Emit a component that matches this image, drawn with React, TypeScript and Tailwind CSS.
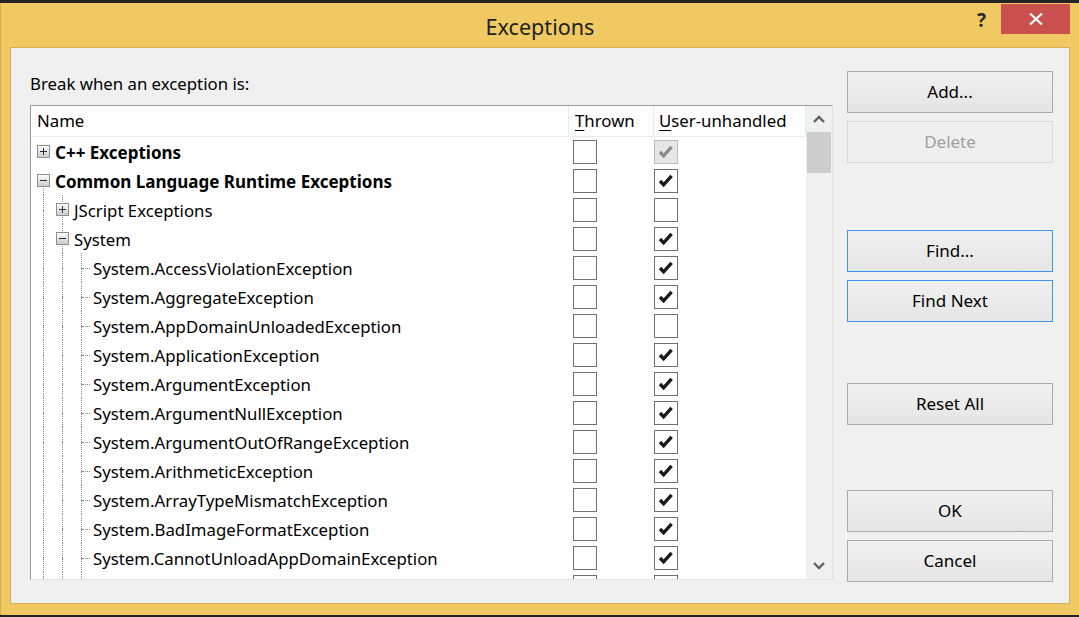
import type { ReactNode } from 'react'

type Gutter = { top?: boolean; bottom?: boolean; tick?: boolean; box?: 'plus' | 'minus' }
type Check = 'on' | 'off' | 'disabled'

type TreeRow = {
  label: string
  gutters: Gutter[]
  bold?: boolean
  thrown: Check
  unhandled: Check
}

const FULL: Gutter = { top: true, bottom: true }
const LEAF: Gutter[] = [FULL, FULL, { top: true, bottom: true, tick: true }]

const leaf = (label: string, unhandled: Check = 'on'): TreeRow => ({
  label,
  gutters: LEAF,
  thrown: 'off',
  unhandled
})

// last row is scrolled half out of view, its label sits below the list edge
const ROWS: TreeRow[] = [
  { label: 'C++ Exceptions', gutters: [{ box: 'plus' }], bold: true, thrown: 'off', unhandled: 'disabled' },
  {
    label: 'Common Language Runtime Exceptions',
    gutters: [{ box: 'minus', bottom: true }],
    bold: true,
    thrown: 'off',
    unhandled: 'on'
  },
  { label: 'JScript Exceptions', gutters: [FULL, { box: 'plus', top: true, bottom: true }], thrown: 'off', unhandled: 'off' },
  { label: 'System', gutters: [FULL, { box: 'minus', top: true, bottom: true }], thrown: 'off', unhandled: 'on' },
  leaf('System.AccessViolationException'),
  leaf('System.AggregateException'),
  leaf('System.AppDomainUnloadedException', 'off'),
  leaf('System.ApplicationException'),
  leaf('System.ArgumentException'),
  leaf('System.ArgumentNullException'),
  leaf('System.ArgumentOutOfRangeException'),
  leaf('System.ArithmeticException'),
  leaf('System.ArrayTypeMismatchException'),
  leaf('System.BadImageFormatException'),
  leaf('System.CannotUnloadAppDomainException'),
  leaf('')
]

function ExpandBox({ kind }: { kind: 'plus' | 'minus' }) {
  return (
    <div className="relative z-10 w-[13px] h-[13px] border border-[#8f8f8f] bg-gradient-to-b from-[#fbfbfb] to-[#cdcdcd] flex items-center justify-center">
      <svg width="11" height="11" viewBox="0 0 11 11">
        <path d="M2 5.5h7" stroke="#1f2f45" strokeWidth="1" />
        {kind === 'plus' && <path d="M5.5 2v7" stroke="#1f2f45" strokeWidth="1" />}
      </svg>
    </div>
  )
}

function GutterCell({ g }: { g: Gutter }) {
  return (
    <div className="relative w-[19px] h-full shrink-0 flex items-center">
      {g.top && <div className="absolute left-[9px] top-0 h-1/2 border-l border-dotted border-[#8a8a8a]" />}
      {g.bottom && <div className="absolute left-[9px] top-1/2 bottom-0 border-l border-dotted border-[#8a8a8a]" />}
      {g.tick && <div className="absolute left-[10px] top-1/2 w-[8px] border-t border-dotted border-[#8a8a8a]" />}
      {g.box && (
        <div className="ml-[3px]">
          <ExpandBox kind={g.box} />
        </div>
      )}
    </div>
  )
}

function CheckBox({ state }: { state: Check }) {
  const disabled = state === 'disabled'
  return (
    <div
      className={`w-[24px] h-[24px] border flex items-center justify-center ${
        disabled ? 'border-[#bcbcbc] bg-[#e6e6e6]' : 'border-[#707070] bg-white'
      }`}
    >
      {state !== 'off' && (
        <svg width="18" height="18" viewBox="0 0 18 18">
          <path
            d="M3 9 L6.6 12.8 L14.6 3.8"
            fill="none"
            stroke={disabled ? '#8c8c8c' : '#1a1a1a'}
            strokeWidth="3.4"
            strokeLinejoin="miter"
          />
        </svg>
      )}
    </div>
  )
}

function DialogButton({
  children,
  focused = false,
  disabled = false,
  className = ''
}: {
  children: ReactNode
  focused?: boolean
  disabled?: boolean
  className?: string
}) {
  const tone = disabled
    ? 'border-[#d9d9d9] bg-[#efefef] text-[#a0a0a0]'
    : focused
      ? 'border-[#3a96f2] bg-gradient-to-b from-[#f0f0f0] to-[#e5e5e5] text-black'
      : 'border-[#acacac] bg-gradient-to-b from-[#f0f0f0] to-[#e5e5e5] text-black'
  return (
    <div className={`h-[42px] border flex items-center justify-center text-[17px] ${tone} ${className}`}>
      {children}
    </div>
  )
}

function ExceptionList() {
  return (
    <div className="w-[803px] h-[475px] border-t border-l border-[#9a9a9a] border-r border-b border-r-[#e3e3e3] border-b-[#e3e3e3] flex overflow-hidden">
      <div className="w-[775px] flex flex-col bg-white">
        <div className="h-[31px] shrink-0 flex border-b border-[#e3ecf7] bg-[#fdfdfd] text-[16.8px] text-black">
          <div className="w-[538px] border-r border-[#e3ecf7] pl-[6px] flex items-center">Name</div>
          <div className="w-[85px] border-r border-[#e3ecf7] pl-[6px] flex items-center">
            <span className="underline underline-offset-[3px]">T</span>hrown
          </div>
          <div className="w-[152px] border-r border-[#e3ecf7] pl-[5px] flex items-center">
            <span className="underline underline-offset-[3px]">U</span>ser-unhandled
          </div>
        </div>
        <div className="flex-1 overflow-hidden">
          {ROWS.map((row, i) => (
            <div key={i} className="h-[29px] flex">
              <div className="w-[538px] h-full pl-[3px] flex items-center">
                {row.gutters.map((g, j) => (
                  <GutterCell key={j} g={g} />
                ))}
                <span
                  className={`ml-[2px] mt-[2px] text-black whitespace-nowrap ${
                    row.bold ? 'font-bold text-[17px]' : 'text-[16.8px]'
                  }`}
                >
                  {row.label}
                </span>
              </div>
              <div className="w-[85px] h-full flex items-center pl-[4px]">
                <CheckBox state={row.thrown} />
              </div>
              <div className="w-[152px] h-full flex items-center">
                <CheckBox state={row.unhandled} />
              </div>
            </div>
          ))}
        </div>
      </div>
      <div className="w-[26px] bg-[#f0f0f0] flex flex-col">
        <div className="h-[26px] flex items-center justify-center">
          <svg width="14" height="10" viewBox="0 0 14 10">
            <path d="M2 8 L7 3 L12 8" fill="none" stroke="#606060" strokeWidth="2.4" />
          </svg>
        </div>
        <div className="ml-[1px] w-[24px] h-[41px] bg-[#cdcdcd]" />
        <div className="flex-1" />
        <div className="h-[26px] flex items-center justify-center">
          <svg width="14" height="10" viewBox="0 0 14 10">
            <path d="M2 2 L7 7 L12 2" fill="none" stroke="#606060" strokeWidth="2.4" />
          </svg>
        </div>
      </div>
    </div>
  )
}

export default function App() {
  return (
    <div className="w-[1079px] h-[617px] bg-[#232323] pt-[3px] overflow-hidden font-['Segoe_UI','Noto_Sans',sans-serif]">
      <div className="h-[612px] bg-[#f0c962] border-l border-[#d3ae56] flex flex-col">
        <div className="h-[44px] shrink-0 grid grid-cols-[1fr_auto_1fr]">
          <div />
          <div className="pt-[10px] text-[21.6px] leading-[28px] text-[#222]">Exceptions</div>
          <div className="flex justify-end items-start pr-[9px]">
            <span className="mt-[5px] mr-[15px] text-[19px] leading-[24px] font-bold text-[#2a2a2a]">?</span>
            <div className="mt-[1px] w-[69px] h-[30px] bg-[#c9504c] flex items-center justify-center">
              <svg width="14" height="12" viewBox="0 0 14 12">
                <path d="M1 0.5 L13 11.5 M13 0.5 L1 11.5" stroke="#ffffff" strokeWidth="2.2" />
              </svg>
            </div>
          </div>
        </div>

        <div className="ml-[9px] w-[1060px] h-[557px] shrink-0 border border-[#d4b05a] bg-[#f0f0f0] flex">
          <div className="pl-[19px] pt-[25px] flex flex-col">
            <div className="text-[16.8px] leading-[22px] text-black">Break when an exception is:</div>
            <div className="mt-[10px]">
              <ExceptionList />
            </div>
          </div>

          <div className="ml-[14px] w-[206px] pt-[23px] flex flex-col">
            <DialogButton>Add...</DialogButton>
            <DialogButton disabled className="mt-[8px]">
              Delete
            </DialogButton>
            <DialogButton focused className="mt-[67px]">
              Find...
            </DialogButton>
            <DialogButton focused className="mt-[8px]">
              Find Next
            </DialogButton>
            <DialogButton className="mt-[61px]">Reset All</DialogButton>
            <DialogButton className="mt-[65px]">OK</DialogButton>
            <DialogButton className="mt-[8px]">Cancel</DialogButton>
          </div>
        </div>
      </div>
    </div>
  )
}
